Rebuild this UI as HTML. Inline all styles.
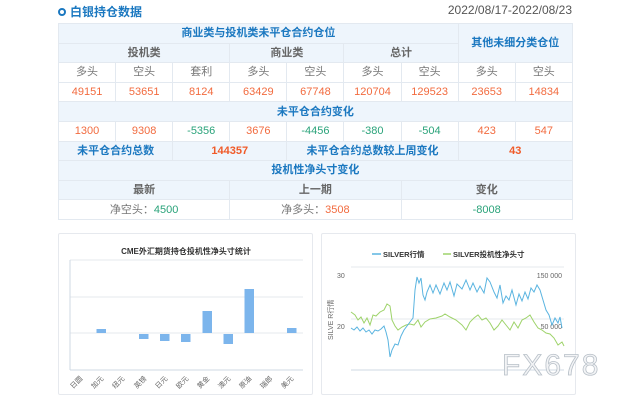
<!DOCTYPE html>
<html><head><meta charset="utf-8"><style>
*{margin:0;padding:0;box-sizing:border-box}
body{width:629px;height:400px;background:#fff;font-family:"Liberation Sans","Noto Sans CJK SC",sans-serif;position:relative;overflow:hidden}
.t{position:absolute;left:58px;top:3px;font-size:12px;font-weight:bold;color:#1b78c0;display:flex;align-items:center}
.t i{display:inline-block;width:8px;height:8px;border:2px solid #1b78c0;border-radius:50%;margin-right:4px}
.d{position:absolute;right:57px;top:3px;font-size:12px;color:#555}
table{position:absolute;left:58px;top:23px;border-collapse:collapse;table-layout:fixed;width:514px}
td{border:1px solid #e3e9f0;height:19.6px;text-align:center;font-size:11px;color:#777;padding:0;line-height:18px}
.h{background:#eef5fc;color:#1b78c0;font-weight:bold}
.g{color:#666;font-weight:bold}
.o{color:#f26b3f}.gr{color:#2aa37a}
.ob{color:#f05a28;font-weight:bold}
.p{position:absolute;border:1px solid #e6e9ee;border-radius:2px}
</style></head><body>
<div class="t"><i></i>白银持仓数据</div>
<div class="d">2022/08/17-2022/08/23</div>
<table>
<colgroup><col span="9" style="width:57.1px"></colgroup>
<tr><td class="h" colspan="7">商业类与投机类未平仓合约仓位</td><td class="h" colspan="2" rowspan="2">其他未细分类仓位</td></tr>
<tr><td class="h g" colspan="3">投机类</td><td class="h g" colspan="2">商业类</td><td class="h g" colspan="2">总计</td></tr>
<tr><td>多头</td><td>空头</td><td>套利</td><td>多头</td><td>空头</td><td>多头</td><td>空头</td><td>多头</td><td>空头</td></tr>
<tr class="o"><td class="o">49151</td><td class="o">53651</td><td class="o">8124</td><td class="o">63429</td><td class="o">67748</td><td class="o">120704</td><td class="o">129523</td><td class="o">23653</td><td class="o">14834</td></tr>
<tr><td class="h" colspan="9">未平仓合约变化</td></tr>
<tr><td class="o">1300</td><td class="o">9308</td><td class="gr">-5356</td><td class="o">3676</td><td class="gr">-4456</td><td class="gr">-380</td><td class="gr">-504</td><td class="o">423</td><td class="o">547</td></tr>
<tr><td class="h" colspan="2">未平仓合约总数</td><td class="h ob" colspan="2">144357</td><td class="h" colspan="3">未平仓合约总数较上周变化</td><td class="h ob" colspan="2">43</td></tr>
<tr><td class="h" colspan="9">投机性净头寸变化</td></tr>
<tr><td class="h g" colspan="3">最新</td><td class="h g" colspan="3">上一期</td><td class="h g" colspan="3">变化</td></tr>
<tr><td colspan="3">净空头：<span class="gr">4500</span></td><td colspan="3">净多头：<span class="o">3508</span></td><td colspan="3" class="gr">-8008</td></tr>
</table>
<div class="p" style="left:58px;top:233px;width:255px;height:162px"></div>
<div class="p" style="left:321px;top:233px;width:255px;height:162px"></div>
<svg style="position:absolute;left:0;top:0" width="629" height="400">
<text x="186" y="254" font-size="8" font-weight="bold" fill="#333" text-anchor="middle" font-family="Liberation Sans,Noto Sans CJK SC,sans-serif">CME外汇期货持仓投机性净头寸统计</text>
<g stroke="#e6e9ee"><line x1="70" y1="260" x2="303" y2="260"/><line x1="70" y1="297" x2="303" y2="297"/><line x1="70" y1="333" x2="303" y2="333"/></g>
<line x1="70" y1="260" x2="70" y2="370" stroke="#cfd8e3"/>
<line x1="70" y1="370" x2="303" y2="370" stroke="#cfd8e3"/>
<g fill="#7cb5ec">
<rect x="96.5" y="329" width="9.5" height="4"/><rect x="139" y="334" width="9.5" height="5"/><rect x="160" y="334" width="9.5" height="7"/><rect x="181" y="334" width="9.5" height="8"/><rect x="202.5" y="311" width="9.5" height="22"/><rect x="223.5" y="334" width="9.5" height="10"/><rect x="244.5" y="289" width="9.5" height="44"/><rect x="287" y="328" width="9.5" height="5"/></g>
<g font-size="7" fill="#666" font-family="Liberation Sans,Noto Sans CJK SC,sans-serif">
<text transform="translate(78,384) rotate(-45)" text-anchor="middle">日圆</text>
<text transform="translate(99,384) rotate(-45)" text-anchor="middle">加元</text>
<text transform="translate(120,384) rotate(-45)" text-anchor="middle">纽元</text>
<text transform="translate(142,384) rotate(-45)" text-anchor="middle">英镑</text>
<text transform="translate(163,384) rotate(-45)" text-anchor="middle">日元</text>
<text transform="translate(184,384) rotate(-45)" text-anchor="middle">欧元</text>
<text transform="translate(205,384) rotate(-45)" text-anchor="middle">黄金</text>
<text transform="translate(226,384) rotate(-45)" text-anchor="middle">澳元</text>
<text transform="translate(247,384) rotate(-45)" text-anchor="middle">原油</text>
<text transform="translate(268,384) rotate(-45)" text-anchor="middle">瑞郎</text>
<text transform="translate(289,384) rotate(-45)" text-anchor="middle">美元</text></g>
<g font-size="7.5" font-family="Liberation Sans,Noto Sans CJK SC,sans-serif" fill="#333" font-weight="bold">
<line x1="372" y1="254" x2="381" y2="254" stroke="#5ab4e0" stroke-width="1.5"/><text x="383" y="257">SILVER行情</text>
<line x1="443" y1="254" x2="451" y2="254" stroke="#9ed36a" stroke-width="1.5"/><text x="453" y="257">SILVER投机性净头寸</text></g>
<g stroke="#e6e9ee"><line x1="351" y1="267" x2="564" y2="267"/><line x1="351" y1="319" x2="564" y2="319"/></g>
<line x1="351" y1="370" x2="564" y2="370" stroke="#cfd8e3"/>
<g font-size="7" fill="#666" font-family="Liberation Sans,Noto Sans CJK SC,sans-serif">
<text x="337" y="278">30</text><text x="337" y="329">20</text>
<text x="562" y="278" text-anchor="end">150 000</text><text x="562" y="329" text-anchor="end">50 000</text>
<text transform="translate(333,340) rotate(-90)">SILVE R行情</text></g>
<polyline fill="none" stroke="#9ed36a" stroke-width="1" points="351,312 355,315 358,320 361,317 364,323 367,318 370,325 373,315 376,316 380,312 384,310 387,304 390,306 392,320 395,326 398,330 402,327 406,325 410,324 414,325 418,320 421,327 425,322 430,319 436,318 442,316 445,314 450,317 456,320 462,325 466,330 470,322 474,318 478,315 482,320 486,318 490,323 494,330 498,326 502,320 506,325 510,330 514,322 518,328 522,320 526,318 530,315 534,322 538,328 542,330 546,333 550,334 554,338 558,345 562,342 564,346"/>
<polyline fill="none" stroke="#5ab4e0" stroke-width="1" points="351,328 354,330 357,327 360,331 363,328 366,332 369,330 372,334 375,330 378,331 381,329 384,326 386,332 388,340 390,357 392,350 395,344 398,345 401,336 404,330 407,326 410,322 413,318 415,290 417,277 419,283 421,278 423,295 425,300 427,292 430,285 433,293 436,285 440,294 444,283 447,290 450,282 454,296 457,284 462,289 466,280 470,290 473,283 477,292 480,286 484,293 487,278 490,282 494,292 497,298 500,285 503,303 506,296 509,300 512,290 516,305 519,294 522,301 525,292 528,299 531,288 534,292 537,285 540,290 543,300 546,310 549,315 552,325 555,318 558,323 560,317 562,328"/>
<text x="502" y="375" font-size="30" font-family="Liberation Sans,sans-serif" fill="#f3f4f6" stroke="#b8c0c8" stroke-width="0.8" letter-spacing="2">FX678</text>
</svg>
</body></html>
